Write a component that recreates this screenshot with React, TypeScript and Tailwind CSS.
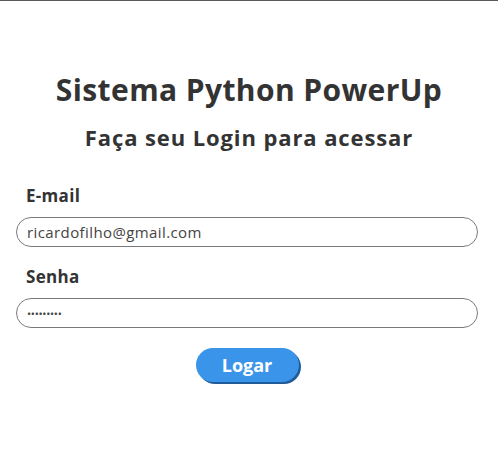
export default function App() {
    return (
        <div className="min-h-[460px] w-[498px] bg-white border-t border-[#5a5a5a] font-['Open_Sans',sans-serif] text-[#333]">
            <div className="px-4 pt-[67px]">
                <h1 className="text-center text-[30px] font-bold leading-[44px] tracking-[0.4px]">Sistema Python PowerUp</h1>
                <h2 className="mt-[8px] text-center text-[22px] font-bold leading-[34px] tracking-[0.9px]">Faça seu Login para acessar</h2>

                <form className="mt-[31px] flex w-[462px] flex-col" onSubmit={e => e.preventDefault()}>
                    <label className="pl-[10px] text-[17px] font-bold leading-[22px] tracking-[0.3px]">E-mail</label>
                    <input
                        type="email"
                        defaultValue="ricardofilho@gmail.com"
                        className="mt-[10px] h-[30px] w-full rounded-full border border-[#7a7a7a] px-[10px] text-[15px] tracking-[0.4px] text-[#444] outline-none"
                    />

                    <label className="mt-[19px] pl-[10px] text-[17px] font-bold leading-[22px] tracking-[0.3px]">Senha</label>
                    <input
                        type="password"
                        defaultValue="123456789"
                        className="mt-[10px] h-[30px] w-full rounded-full border border-[#7a7a7a] px-[10px] text-[11px] tracking-[-0.3px] text-[#444] outline-none"
                    />

                    <div className="mt-[20px] flex justify-center">
                        <button
                            type="submit"
                            className="h-[34px] w-[103px] rounded-full bg-[#3a95ea] text-[18px] font-bold text-white shadow-[2px_2px_0_#1f5c99]"
                        >
                            Logar
                        </button>
                    </div>
                </form>
            </div>
        </div>
    )
}
